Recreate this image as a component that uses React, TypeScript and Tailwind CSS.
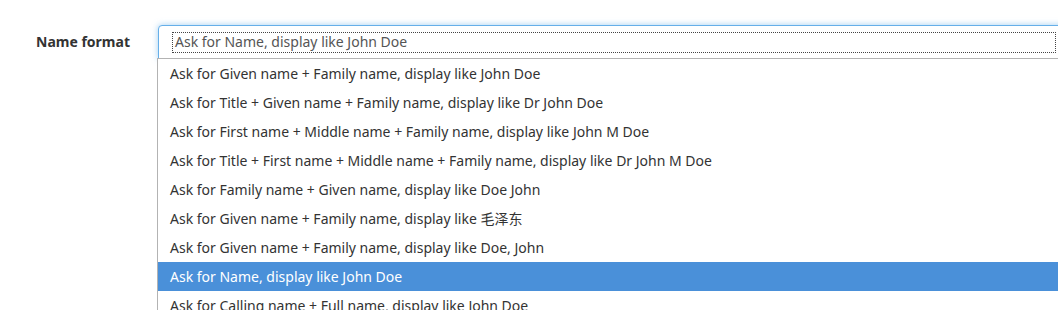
import React from "react";

const OPTIONS = [
  "Ask for Given name + Family name, display like John Doe",
  "Ask for Title + Given name + Family name, display like Dr John Doe",
  "Ask for First name + Middle name + Family name, display like John M Doe",
  "Ask for Title + First name + Middle name + Family name, display like Dr John M Doe",
  "Ask for Family name + Given name, display like Doe John",
  "Ask for Given name + Family name, display like 毛泽东",
  "Ask for Given name + Family name, display like Doe, John",
  "Ask for Name, display like John Doe",
  "Ask for Calling name + Full name, display like John Doe",
];

const SELECTED = 7;

export default function App() {
  return (
    <div
      className="w-[1058px] h-[310px] overflow-hidden bg-white text-[14px] text-[#333]"
      style={{ fontFamily: '"Noto Sans", "Noto Sans CJK SC", sans-serif' }}
    >
      <div className="flex items-start pt-[25px]">
        {/* Label */}
        <div className="w-[158px] shrink-0 pl-[36px] h-[33px] flex items-center font-bold">
          Name format
        </div>

        {/* Select with open listbox */}
        <div className="relative flex-1 min-w-0">
          <div className="h-[34px] w-[910px] border border-[#66afe9] rounded-tl-[4px] bg-white shadow-[0_0_6px_rgba(102,175,233,0.6)] flex items-center pl-[13px]">
            <span className="w-[884px] shrink-0 h-[21px] border border-dotted border-[#444] flex items-center pl-[2px] text-[#555] leading-none">
              Ask for Name, display like John Doe
            </span>
          </div>

          <ul className="absolute left-[-1px] top-[33px] w-[910px] bg-white border-t border-l border-[#b3b3b3]">
            {OPTIONS.map((opt, i) => (
              <li
                key={i}
                className={
                  i === SELECTED
                    ? "h-[29px] flex items-center pl-[12px] bg-[#4a90d9] text-white whitespace-nowrap"
                    : "h-[29px] flex items-center pl-[12px] text-[#333] whitespace-nowrap"
                }
              >
                {opt}
              </li>
            ))}
          </ul>
        </div>
      </div>
    </div>
  );
}
